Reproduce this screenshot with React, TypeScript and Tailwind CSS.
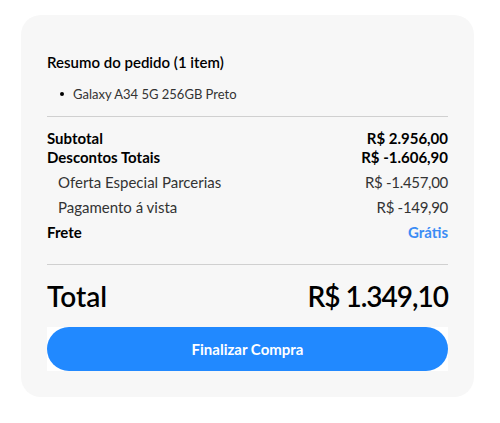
const rows = [
  { label: "Oferta Especial Parcerias", value: "R$ -1.457,00" },
  { label: "Pagamento á vista", value: "R$ -149,90" },
];

export default function App() {
  return (
    <div className="min-h-[423px] w-[500px] bg-white font-['Lato',sans-serif] text-black">
      <div className="ml-[21px] mt-[15px] w-[453px] rounded-[20px] bg-[#f7f7f7] px-[26px] pb-[26px] pt-[37px]">
        <div className="text-[15px] font-semibold leading-[20px]">Resumo do pedido (1 item)</div>
        <ul className="mt-[12px] flex flex-col">
          <li className="flex items-center pl-[13px] text-[13px] leading-[20px] text-[#333]">
            <span className="mr-[9px] h-[4px] w-[4px] rounded-full bg-black" />
            Galaxy A34 5G 256GB Preto
          </li>
        </ul>
        <div className="mt-[12px] h-px bg-[#d0d0d0]" />
        <div className="mt-[12px] flex flex-col">
          <div className="flex justify-between text-[15px] font-bold leading-[19px]">
            <span>Subtotal</span>
            <span>R$ 2.956,00</span>
          </div>
          <div className="flex justify-between text-[15px] font-bold leading-[19px]">
            <span>Descontos Totais</span>
            <span>R$ -1.606,90</span>
          </div>
          {rows.map((row) => (
            <div
              key={row.label}
              className="mt-[5px] flex justify-between pl-[11px] text-[15px] leading-[20px] text-[#333]"
            >
              <span>{row.label}</span>
              <span className="tracking-[-0.3px]">{row.value}</span>
            </div>
          ))}
          <div className="mt-[5px] flex justify-between text-[15px] font-bold leading-[20px]">
            <span>Frete</span>
            <span className="text-[#3b8cf5]">Grátis</span>
          </div>
        </div>
        <div className="mt-[22px] h-px bg-[#d0d0d0]" />
        <div className="mt-[14px] flex items-center justify-between text-[28px] font-semibold leading-[34px]">
          <span>Total</span>
          <span className="tracking-[-1px]">R$ 1.349,10</span>
        </div>
        <div className="mt-[14px] bg-white">
          <button className="flex h-[44px] w-full items-center justify-center rounded-full bg-[#2189ff] text-[15px] font-bold text-white">
            Finalizar Compra
          </button>
        </div>
      </div>
    </div>
  );
}
